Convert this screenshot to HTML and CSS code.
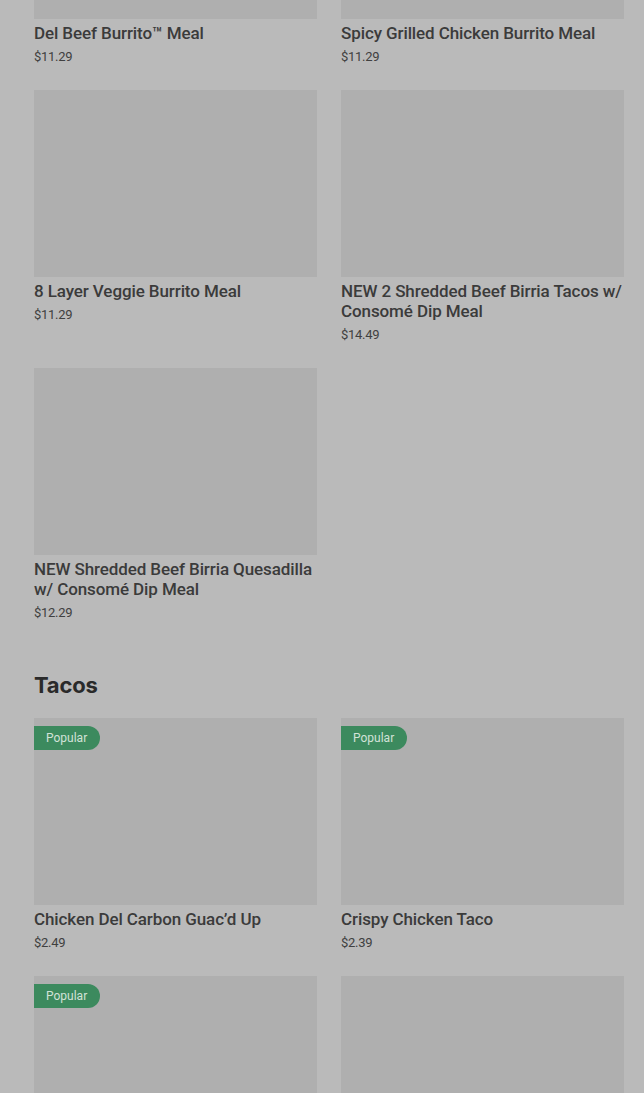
FILE: index.html
```html
<!DOCTYPE html>
<html lang="en">

<head>
    <meta charset="UTF-8">
    <title>Menu</title>
    <link rel="stylesheet" href="styles.css">
</head>

<body>
    <div class="page">
        <!-- burritos, scrolled part way -->
        <ul class="grid">
            <li class="card">
                <div class="pic"></div>
                <h3>Del Beef Burrito™ Meal</h3>
                <p class="price">$11.29</p>
            </li>
            <li class="card">
                <div class="pic"></div>
                <h3>Spicy Grilled Chicken Burrito Meal</h3>
                <p class="price">$11.29</p>
            </li>
            <li class="card">
                <div class="pic"></div>
                <h3>8 Layer Veggie Burrito Meal</h3>
                <p class="price">$11.29</p>
            </li>
            <li class="card">
                <div class="pic"></div>
                <h3>NEW 2 Shredded Beef Birria Tacos w/ Consomé Dip Meal</h3>
                <p class="price">$14.49</p>
            </li>
            <li class="card">
                <div class="pic"></div>
                <h3>NEW Shredded Beef Birria Quesadilla w/ Consomé Dip Meal</h3>
                <p class="price">$12.29</p>
            </li>
        </ul>

        <h2 class="section">Tacos</h2>
        <ul class="grid">
            <li class="card">
                <div class="pic"><span class="badge">Popular</span></div>
                <h3>Chicken Del Carbon Guac’d Up</h3>
                <p class="price">$2.49</p>
            </li>
            <li class="card">
                <div class="pic"><span class="badge">Popular</span></div>
                <h3>Crispy Chicken Taco</h3>
                <p class="price">$2.39</p>
            </li>
            <li class="card">
                <div class="pic"><span class="badge">Popular</span></div>
            </li>
            <li class="card">
                <div class="pic"></div>
            </li>
        </ul>
    </div>
</body>

</html>
```

FILE: styles.css
```css
* {
    margin: 0;
    padding: 0;
    list-style: none;
    box-sizing: border-box;
}

html,
body {
    height: 100%;
    overflow: hidden;
}

body {
    background: #bababa;
    color: #333;
    font-family: Roboto, "Liberation Sans", sans-serif;
}

.page {
    margin-top: -168px;
    padding: 0 20px 0 34px;
}

.grid {
    display: grid;
    grid-template-columns: 283px 283px;
    column-gap: 24px;
    row-gap: 23px;
}

.card {
    display: flex;
    flex-direction: column;
}

.pic {
    height: 187px;
    background: #afafaf;
    margin-bottom: 4px;
    position: relative;
}

.card h3 {
    font-size: 17px;
    line-height: 20px;
    font-weight: 500;
    color: #3b3b3b;
    letter-spacing: -0.1px;
}

.price {
    margin-top: 4px;
    font-size: 13px;
    line-height: 20px;
    color: #404040;
    letter-spacing: -0.3px;
}

.section {
    font-family: Inter, "Noto Sans", sans-serif;
    font-size: 22px;
    line-height: 32px;
    font-weight: 700;
    color: #2a2a2a;
    margin: 46px 0 17px;
    letter-spacing: -0.2px;
}

.badge {
    position: absolute;
    left: 0;
    top: 8px;
    height: 24px;
    line-height: 24px;
    padding: 0 13px 0 12px;
    border-radius: 0 12px 12px 0;
    background: #3c8a5e;
    color: #d2e2d8;
    font-size: 12px;
}
```
